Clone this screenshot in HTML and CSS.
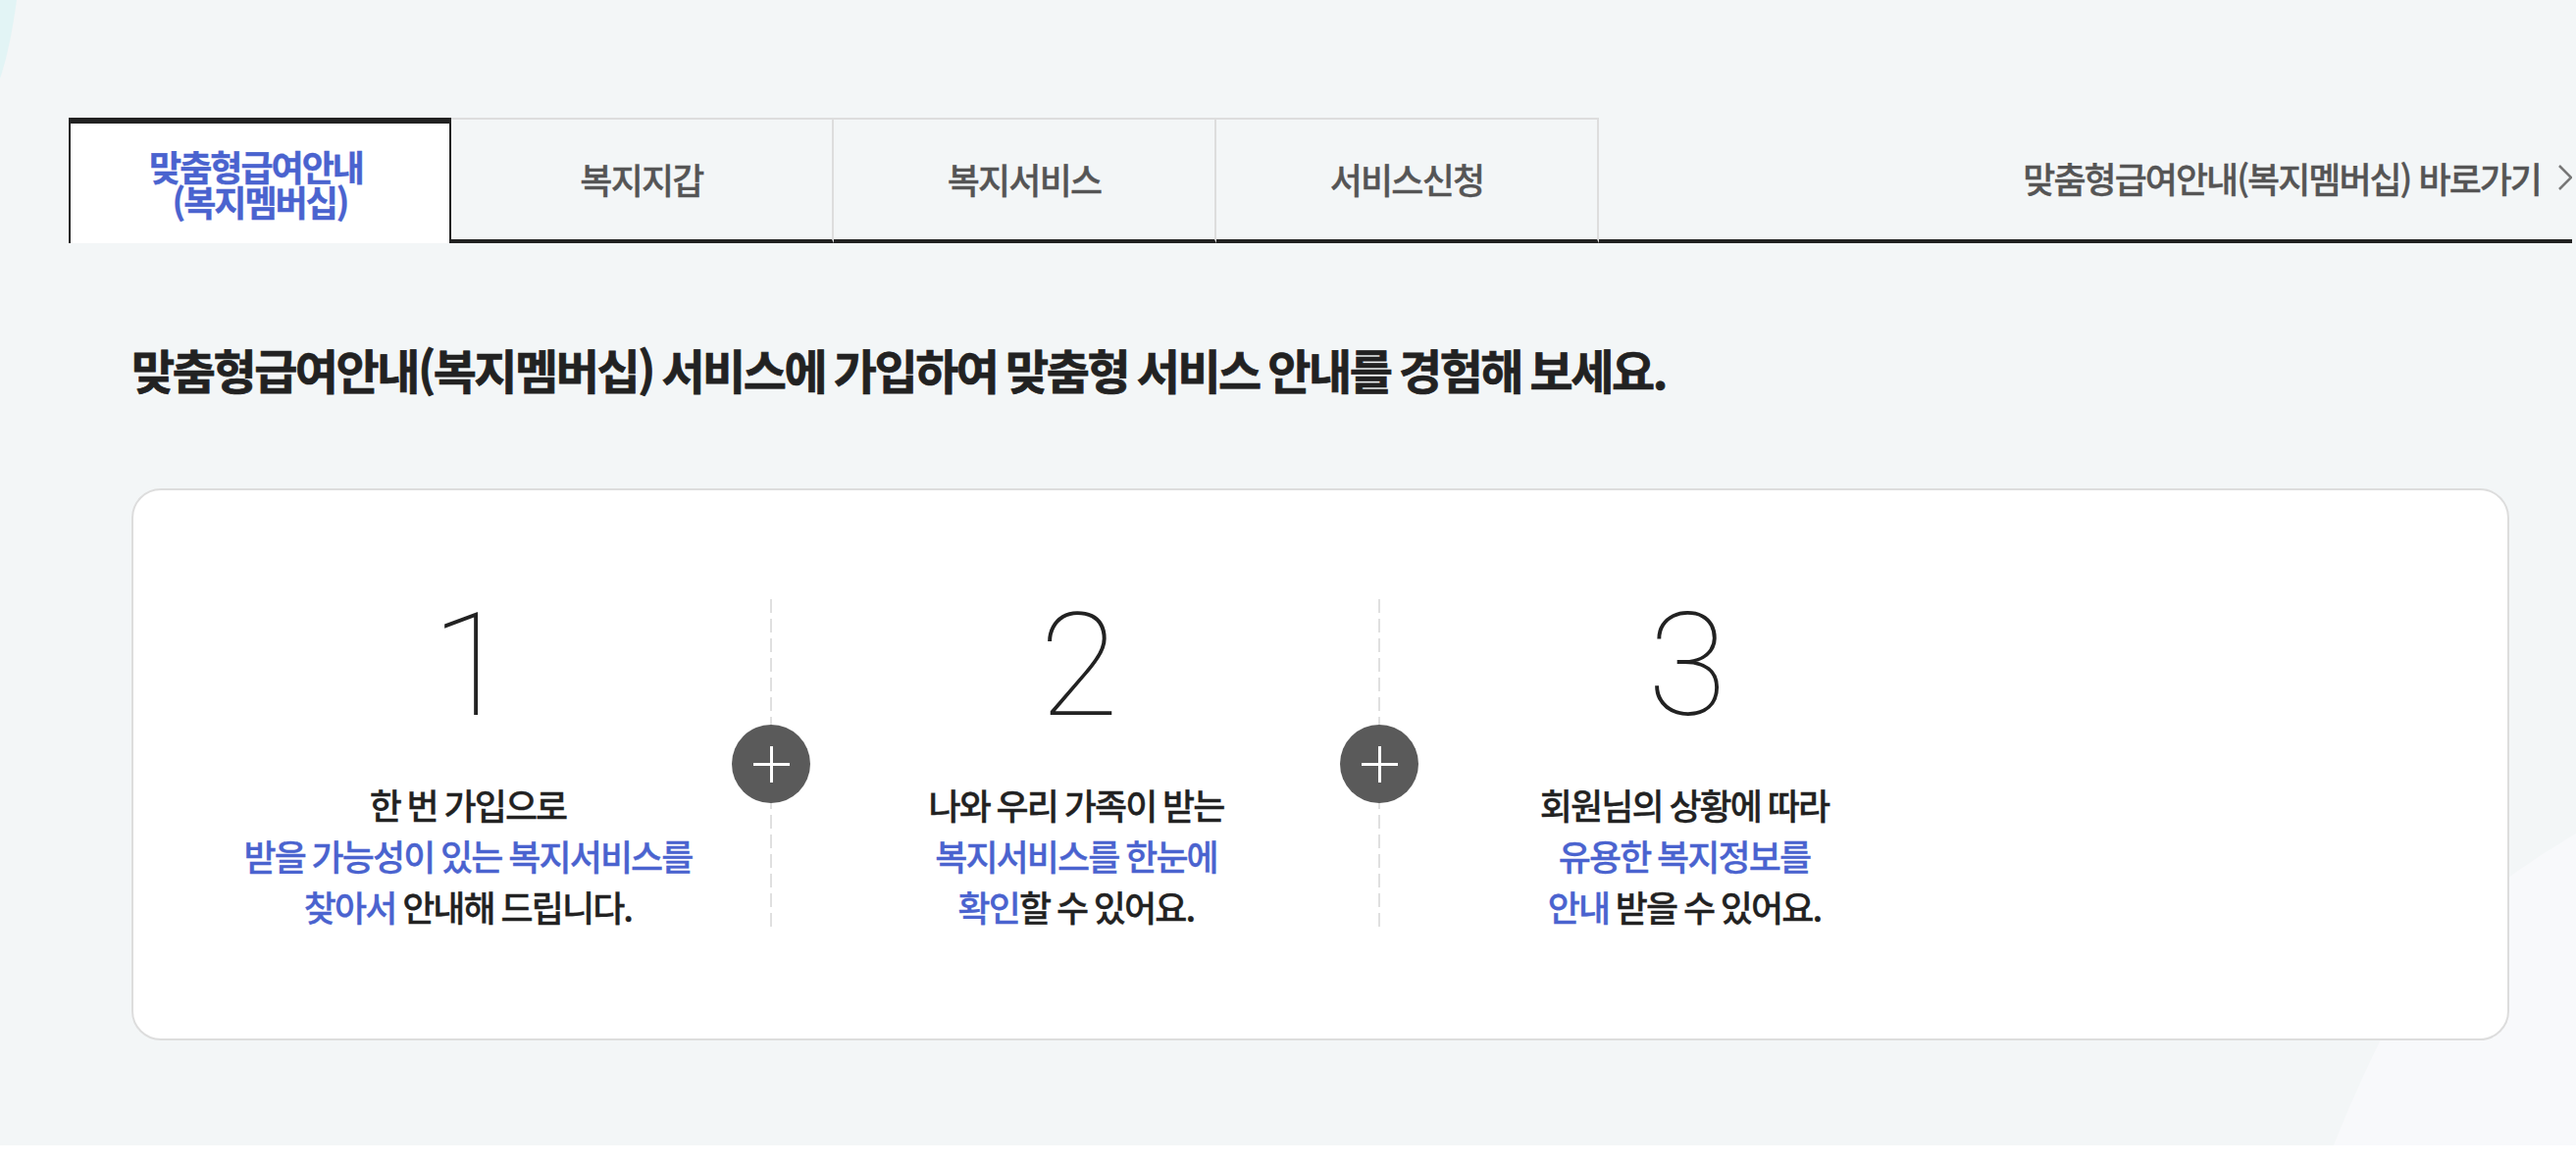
FILE: index.html
```html
<!DOCTYPE html>
<html lang="ko">
<head>
<meta charset="utf-8">
<title>맞춤형급여안내</title>
<link rel="stylesheet" href="styles.css">
</head>
<body>
<main class="page">
  <svg class="deco" viewBox="0 0 2626 1186" preserveAspectRatio="none" aria-hidden="true">
    <path class="deco-cyan" d="M0 0H17C13 30 7 60 0 80Z"/>
    <path class="deco-light" d="M2626 850C2500 925 2460 980 2426 1062C2405 1105 2390 1140 2379 1168H2626Z"/>
  </svg>
  <nav class="tabbar">
    <ul class="tabs">
      <li class="tab tab-active"><a>맞춤형급여안내&nbsp;<br>(복지멤버십)</a></li>
      <li class="tab"><a>복지지갑</a></li>
      <li class="tab"><a>복지서비스</a></li>
      <li class="tab"><a>서비스신청</a></li>
    </ul>
    <a class="shortcut">맞춤형급여안내(복지멤버십) 바로가기
      <svg class="chev" viewBox="0 0 14 26" aria-hidden="true"><path d="M1 1L13 13L1 25"/></svg>
    </a>
  </nav>
  <h2 class="headline">맞춤형급여안내(복지멤버십) 서비스에 가입하여 맞춤형 서비스 안내를 경험해 보세요.</h2>
  <section class="card">
    <div class="step">
      <div class="num">1</div>
      <p class="desc">한 번 가입으로<br><em>받을 가능성이 있는 복지서비스를</em><br><em>찾아서</em> 안내해 드립니다.</p>
      <span class="plus"></span>
    </div>
    <div class="step">
      <div class="num">2</div>
      <p class="desc">나와 우리 가족이 받는<br><em>복지서비스를 한눈에</em><br><em>확인</em>할 수 있어요.</p>
      <span class="plus"></span>
    </div>
    <div class="step step-last">
      <div class="num">3</div>
      <p class="desc">회원님의 상황에 따라<br><em>유용한 복지정보를</em><br><em>안내</em> 받을 수 있어요.</p>
    </div>
  </section>
</main>
</body>
</html>
```
FILE: styles.css
```css
* { box-sizing: border-box; }
html, body { margin: 0; padding: 0; background: #fff; }
body { font-family: "Noto Sans CJK KR", "Noto Sans", sans-serif; color: #222; height: 1186px; overflow: hidden; }
.page { position: relative; height: 1168px; background: #f3f6f7; padding: 120px 4px 0 70px; }
.deco { position: absolute; left: 0; top: 0; width: 2626px; height: 1186px; pointer-events: none; }
.deco-cyan { fill: #e2f4f5; }
.deco-light { fill: #f8f9fb; }
.tabbar { position: relative; display: flex; align-items: stretch; height: 128px; }
.tabs { display: flex; list-style: none; margin: 0; padding: 0; }
.tab { width: 390px; height: 128px; border-top: 2px solid #ddd; border-right: 2px solid #ddd; border-bottom: 4px solid #222; display: flex; align-items: center; justify-content: center; text-align: center; font-size: 36px; font-weight: 500; letter-spacing: -1.8px; color: #555; padding-bottom: 2px; -webkit-text-stroke: 0.3px #555; }
.tab-active { border-top: 6px solid #222; border-left: 2px solid #222; border-right: 2px solid #222; border-bottom: 0; background: #fff; color: #4a63cf; font-weight: 700; letter-spacing: -2px; line-height: 36px; padding-bottom: 0; -webkit-text-stroke: 0.4px #4a63cf; }
.shortcut { flex: 1; display: flex; align-items: center; justify-content: flex-end; gap: 18px; border-bottom: 4px solid #222; font-size: 36px; font-weight: 500; letter-spacing: -2px; color: #555; padding-bottom: 2px; white-space: nowrap; -webkit-text-stroke: 0.3px #555; }
.chev { width: 14px; height: 26px; flex: none; }
.chev path { fill: none; stroke: #777; stroke-width: 2.5; }
.headline { position: relative; margin: 94px 0 0 64px; font-size: 48px; line-height: 68px; font-weight: 700; letter-spacing: -2.45px; word-spacing: -2.5px; color: #222; -webkit-text-stroke: 0.7px #222; }
.card { position: relative; display: flex; margin: 88px 0 0 64px; width: 2424px; height: 563px; background: #fff; border: 2px solid #ddd; border-radius: 30px; padding: 111px 0 0 31px; }
.step { position: relative; width: 620px; height: 336px; background: repeating-linear-gradient(#e0e0e0 0 14px, transparent 14px 20px) right top / 2px 100% no-repeat; text-align: center; }
.step-last { background: none; }
.num { margin-top: -7px; padding-left: 6px; font-family: Roboto, sans-serif; font-weight: 100; font-size: 147px; line-height: 150px; color: #222; }
.desc { margin: 40px 0 0; font-size: 36px; line-height: 52px; font-weight: 500; letter-spacing: -1.9px; word-spacing: -1.5px; color: #222; -webkit-text-stroke: 0.3px currentColor; }
.desc em { font-style: normal; color: #4a63cf; }
.plus { position: absolute; right: -39px; top: 128px; width: 80px; height: 80px; border-radius: 50%; background: #5a5a5a linear-gradient(#fff, #fff) center / 37px 3px no-repeat; }
.plus::after { content: ""; position: absolute; left: 38.5px; top: 21.5px; width: 3px; height: 37px; background: #fff; }
```
